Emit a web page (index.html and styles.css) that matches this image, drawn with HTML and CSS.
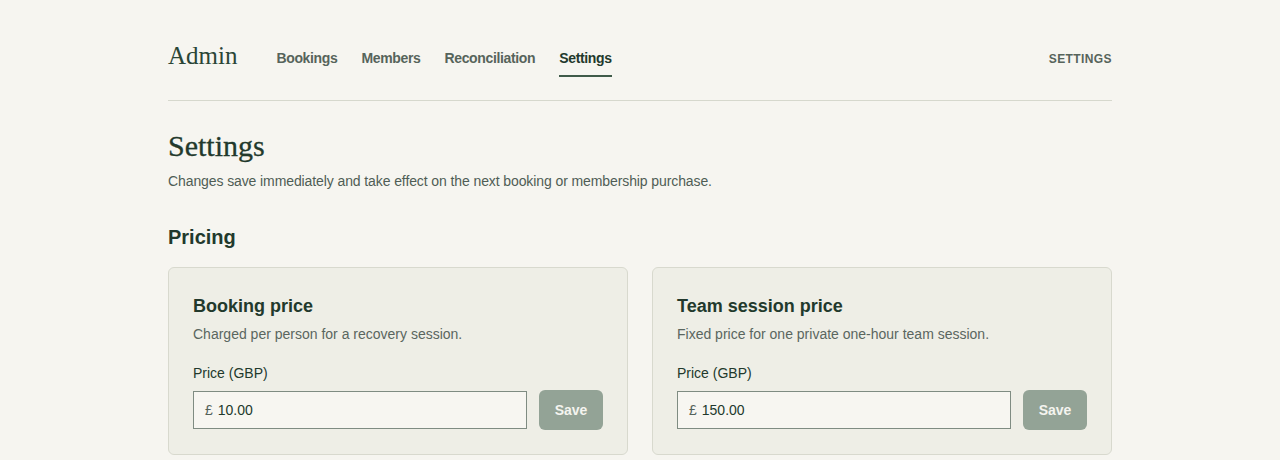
FILE: index.html
```html
<!DOCTYPE html>
<html>
<head>
 <meta charset="utf-8"/>
 <title>Admin - Settings</title>
<link rel="stylesheet" href="styles.css">
</head>
<body>
<div class="page">
 <header class="topbar">
  <div class="brand">Admin</div>
  <nav class="nav">
   <a class="nav-link" href="#">Bookings</a>
   <a class="nav-link" href="#">Members</a>
   <a class="nav-link" href="#">Reconciliation</a>
   <a class="nav-link active" href="#">Settings</a>
  </nav>
  <div class="crumb">Settings</div>
 </header>

 <h1 class="title">Settings</h1>
 <p class="lead">Changes save immediately and take effect on the next booking or membership purchase.</p>

 <h2 class="section">Pricing</h2>
 <div class="cards">
  <div class="card">
   <h3 class="card-title">Booking price</h3>
   <p class="card-desc">Charged per person for a recovery session.</p>
   <label class="field-label">Price (GBP)</label>
   <div class="field-row">
    <div class="input"><span class="cur">£</span><span>10.00</span></div>
    <button class="btn">Save</button>
   </div>
  </div>
  <div class="card">
   <h3 class="card-title">Team session price</h3>
   <p class="card-desc">Fixed price for one private one-hour team session.</p>
   <label class="field-label">Price (GBP)</label>
   <div class="field-row">
    <div class="input"><span class="cur">£</span><span>150.00</span></div>
    <button class="btn">Save</button>
   </div>
  </div>
 </div>
</div>
</body>
</html>
```

FILE: styles.css
```css
body {
 margin:       0;
 background:   #f6f5f0;
 color:        #22392c;
 font-family:  "Liberation Sans", Arial, sans-serif;
}

.page {
 width:        944px;
 margin:       0 auto;
}

.topbar {
 display:      flex;
 align-items:  center;
 padding:      40px 0 23px;
 border-bottom: 1px solid #d6d8cd;
}

.brand {
 font-family:  "Liberation Serif", "DejaVu Serif", serif;
 font-size:    25px;
 color:        #2a4536;
 margin-right: 39px;
 margin-top:   -6px;
}

.nav {
 display:      flex;
 gap:          24px;
 flex:         1;
}

.nav-link {
 font-size:    14px;
 line-height:  20px;
 font-weight:  bold;
 letter-spacing: -0.35px;
 color:        #56645b;
 text-decoration: none;
 padding:      8px 0 7px;
 border-bottom: 2px solid transparent;
}

.nav-link.active {
 color:        #22392c;
 border-bottom-color: #3f5b49;
}

.crumb {
 font-size:    12px;
 font-weight:  bold;
 letter-spacing: 0.4px;
 text-transform: uppercase;
 color:        #56645b;
}

.title {
 font-family:  "Liberation Serif", "DejaVu Serif", serif;
 font-weight:  normal;
 font-size:    30px;
 line-height:  36px;
 margin:       27px 0 0;
 color:        #22392c;
 -webkit-text-stroke: 0.3px #22392c;
}

.lead {
 font-size:    14px;
 line-height:  20px;
 letter-spacing: -0.1px;
 margin:       7px 0 0;
 color:        #4f5d55;
}

.section {
 font-size:    20px;
 line-height:  28px;
 margin:       32px 0 16px;
 color:        #22392c;
}

.cards {
 display:      grid;
 grid-template-columns: 1fr 1fr;
 gap:          24px;
}

.card {
 background:   #eeeee6;
 border:       1px solid #d8d9ce;
 border-radius: 6px;
 padding:      24px;
}

.card-title {
 font-size:    18px;
 line-height:  24px;
 margin:       2px 0 0;
 color:        #22392c;
}

.card-desc {
 font-size:    14px;
 line-height:  20px;
 margin:       6px 0 0;
 color:        #5a665f;
}

.field-label {
 display:      block;
 font-size:    14px;
 line-height:  20px;
 margin:       19px 0 7px;
 color:        #22392c;
}

.field-row {
 display:      flex;
 gap:          12px;
 align-items:  center;
}

.input {
 flex:         1;
 height:       36px;
 display:      flex;
 align-items:  center;
 gap:          5px;
 padding:      0 11px;
 background:   #f7f6f1;
 border:       1px solid #7f8c82;
 font-size:    14px;
 color:        #22392c;
}

.cur {
 color:        #55625a;
}

.btn {
 width:        64px;
 height:       40px;
 border:       0;
 border-radius: 6px;
 background:   #93a396;
 color:        #f4f4ef;
 font-family:  "Liberation Sans", Arial, sans-serif;
 font-size:    14px;
 font-weight:  bold;
}
```
